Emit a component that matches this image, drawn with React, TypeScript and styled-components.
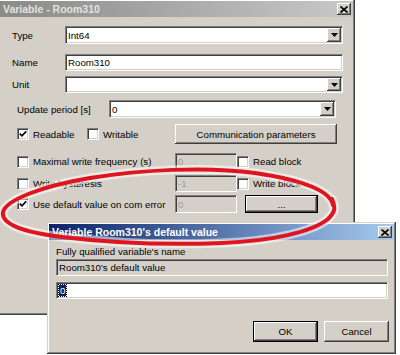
import React from "react";
import styled, { createGlobalStyle, css } from "styled-components";

const GlobalStyle = createGlobalStyle`
  html, body { margin: 0; padding: 0; background: #fff; }
  body { font-family: "Liberation Sans", Arial, sans-serif; font-size: 9.7px; color: #000; }
  * { box-sizing: border-box; }
`;

const raised = css`
  box-shadow: inset -1px -1px #404040, inset 1px 1px #fff, inset -2px -2px #808080, inset 2px 2px #d4d0c8;
`;

const Desktop = styled.div`
  position: relative;
  width: 400px;
  height: 355px;
  overflow: hidden;
  background: #fff;
`;

const Window = styled.div<{ $x: number; $y: number; $w: number; $h: number }>`
  position: absolute;
  left: ${(p) => p.$x}px;
  top: ${(p) => p.$y}px;
  width: ${(p) => p.$w}px;
  height: ${(p) => p.$h}px;
  background: #d4d0c8;
  padding: 2px;
  box-shadow: inset -1px -1px #404040, inset 1px 1px #d4d0c8, inset -2px -2px #808080, inset 2px 2px #fff;
  display: flex;
  flex-direction: column;
`;

const TitleBar = styled.div<{ $active?: boolean }>`
  height: 16px;
  flex: none;
  display: flex;
  align-items: center;
  justify-content: space-between;
  padding: 0 2px 0 3px;
  background: ${(p) =>
    p.$active
      ? "linear-gradient(to right, #0a246a, #a6caf0)"
      : "linear-gradient(to right, #8a8a8a, #c8c8c8)"};
  color: ${(p) => (p.$active ? "#fff" : "#e4e2dc")};
  font-weight: bold;
  font-size: 10.5px;
  white-space: nowrap;
`;

const CloseButton = styled.div`
  width: 14px;
  height: 12px;
  background: #d4d0c8;
  ${raised};
  display: flex;
  align-items: center;
  justify-content: center;
  svg { display: block; }
`;

const MainBody = styled.div`
  display: flex;
  flex-direction: column;
  padding: 0 10px 0 12px;
`;

const FieldRow = styled.div<{ $gap: number; $h: number; $indent?: number; $right?: number }>`
  display: flex;
  align-items: center;
  margin-top: ${(p) => p.$gap}px;
  height: ${(p) => p.$h}px;
  padding-left: ${(p) => p.$indent ?? 0}px;
  padding-right: ${(p) => p.$right ?? 0}px;
`;

const Label = styled.span<{ $w: number }>`
  width: ${(p) => p.$w}px;
  flex: none;
  white-space: nowrap;
`;

const Field = styled.div<{ $disabled?: boolean; $w?: number }>`
  ${(p) => (p.$w ? `width: ${p.$w}px; flex: none;` : "flex: 1;")}
  height: 100%;
  display: flex;
  align-items: center;
  padding-left: 2px;
  border: 1px solid;
  border-color: #808080 #fff #fff #808080;
  box-shadow: inset 1px 1px #404040, inset -1px -1px #d4d0c8;
  background: ${(p) => (p.$disabled ? "#d4d0c8" : "#fff")};
  color: ${(p) => (p.$disabled ? "#a09c94" : "#000")};
  white-space: nowrap;
`;

const FieldText = styled.span`
  flex: 1;
`;

const DropButton = styled.div`
  width: 14px;
  align-self: stretch;
  margin: 1px;
  background: #d4d0c8;
  ${raised};
  display: flex;
  align-items: center;
  justify-content: center;
  svg { display: block; }
`;

const LowerSection = styled.div`
  display: flex;
  flex-direction: column;
  padding: 0 6px 0 5px;
`;

const OptionRow = styled.div<{ $gap: number; $h: number }>`
  display: flex;
  align-items: center;
  margin-top: ${(p) => p.$gap}px;
  height: ${(p) => p.$h}px;
`;

const CheckItem = styled.label<{ $w?: number }>`
  display: flex;
  align-items: center;
  gap: 4px;
  ${(p) => (p.$w ? `width: ${p.$w}px; flex: none;` : "flex: 1;")}
  white-space: nowrap;
`;

const CheckBox = styled.span`
  width: 12px;
  height: 12px;
  flex: none;
  background: #fff;
  border: 1px solid;
  border-color: #808080 #fff #fff #808080;
  box-shadow: inset 1px 1px #404040, inset -1px -1px #d4d0c8;
  display: flex;
  align-items: center;
  justify-content: center;
  svg { display: block; }
`;

const Button = styled.div<{ $w: number; $default?: boolean; $ml?: number }>`
  width: ${(p) => p.$w}px;
  height: 100%;
  flex: none;
  margin-left: ${(p) => p.$ml ?? 0}px;
  background: #d4d0c8;
  display: flex;
  align-items: center;
  justify-content: center;
  white-space: nowrap;
  ${(p) =>
    p.$default
      ? css`
          border: 1px solid #000;
          box-shadow: inset -1px -1px #404040, inset 1px 1px #fff, inset -2px -2px #808080;
        `
      : raised};
`;

const DialogBody = styled.div`
  display: flex;
  flex-direction: column;
  padding: 0 6px 0 7px;
`;

const DialogLabel = styled.div`
  margin-top: 6px;
  height: 12px;
  line-height: 12px;
  white-space: nowrap;
`;

const DialogField = styled(Field)`
  flex: none;
  height: 17px;
  margin-top: ${(p: { $gap?: number }) => p.$gap ?? 0}px;
`;

const Selected = styled.span`
  background: #0a246a;
  color: #fff;
  padding: 0 1px;
  outline: 1px dotted #000;
`;

const ButtonRow = styled.div`
  display: flex;
  justify-content: flex-end;
  gap: 6px;
  margin-top: 22px;
  margin-right: -1px;
  height: 21px;
`;

const Annotation = styled.svg`
  position: absolute;
  left: 0;
  top: 0;
  pointer-events: none;
`;

const CloseGlyph = () => (
  <svg width="8" height="7" viewBox="0 0 8 7">
    <path d="M0.5 0.5 L7.5 6.5 M7.5 0.5 L0.5 6.5" stroke="#000" strokeWidth="1.6" />
  </svg>
);

const Arrow = () => (
  <svg width="7" height="4" viewBox="0 0 7 4">
    <path d="M0 0 H7 L3.5 4 Z" fill="#000" />
  </svg>
);

const Check = () => (
  <svg width="8" height="8" viewBox="0 0 8 8">
    <path d="M0.8 3.6 L3 5.8 L7.2 1.4" stroke="#000" strokeWidth="1.7" fill="none" />
  </svg>
);

const Combo = ({ value }: { value: string }) => (
  <Field>
    <FieldText>{value}</FieldText>
    <DropButton>
      <Arrow />
    </DropButton>
  </Field>
);

const Option = ({ label, checked, w }: { label: string; checked?: boolean; w?: number }) => (
  <CheckItem $w={w}>
    <CheckBox>{checked && <Check />}</CheckBox>
    <span>{label}</span>
  </CheckItem>
);

const ellipse =
  "M333 205 C330 190 302 180 255 173 C205 166 140 170 90 178 C42 186 6 200 3 212 C1 224 22 232 62 237 C112 243 172 245 222 243 C272 241 312 232 328 219 C335 212 336 208 332 199";

export default function App() {
  return (
    <>
      <GlobalStyle />
      <Desktop>
        <Window $x={-2} $y={-1} $w={357} $h={316}>
          <TitleBar>
            <span>Variable - Room310</span>
            <CloseButton>
              <CloseGlyph />
            </CloseButton>
          </TitleBar>
          <MainBody>
            <FieldRow $gap={9} $h={18}>
              <Label $w={53}>Type</Label>
              <Combo value="Int64" />
            </FieldRow>
            <FieldRow $gap={10} $h={17}>
              <Label $w={53}>Name</Label>
              <Field>
                <FieldText>Room310</FieldText>
              </Field>
            </FieldRow>
            <FieldRow $gap={5} $h={17}>
              <Label $w={53}>Unit</Label>
              <Combo value="" />
            </FieldRow>
            <FieldRow $gap={7} $h={18} $indent={5} $right={7}>
              <Label $w={92}>Update period [s]</Label>
              <Combo value="0" />
            </FieldRow>
            <LowerSection>
              <OptionRow $gap={6} $h={20}>
                <Option label="Readable" checked w={70} />
                <Option label="Writable" />
                <Button $w={162}>Communication parameters</Button>
              </OptionRow>
              <OptionRow $gap={9} $h={17}>
                <Option label="Maximal write frequency (s)" w={158} />
                <Field $disabled $w={62}>0</Field>
                <Option label="Read block" w={92} />
              </OptionRow>
              <OptionRow $gap={5} $h={17}>
                <Option label="Write hysteresis" w={158} />
                <Field $disabled $w={62}>-1</Field>
                <Option label="Write block" w={92} />
              </OptionRow>
              <OptionRow $gap={3} $h={18}>
                <Option label="Use default value on com error" checked w={158} />
                <Field $disabled $w={62}>0</Field>
                <Button $w={73} $ml={8} $default>...</Button>
              </OptionRow>
            </LowerSection>
          </MainBody>
        </Window>

        <Window $x={47} $y={222} $w={349} $h={132}>
          <TitleBar $active>
            <span>Variable Room310's default value</span>
            <CloseButton>
              <CloseGlyph />
            </CloseButton>
          </TitleBar>
          <DialogBody>
            <DialogLabel>Fully qualified variable's name</DialogLabel>
            <DialogField $disabled $gap={1} style={{ color: "#000" }}>
              Room310's default value
            </DialogField>
            <DialogField $gap={6}>
              <Selected>0</Selected>
            </DialogField>
            <ButtonRow>
              <Button $w={65} $default>OK</Button>
              <Button $w={65}>Cancel</Button>
            </ButtonRow>
          </DialogBody>
        </Window>

        <Annotation width="400" height="355" viewBox="0 0 400 355">
          <path d={ellipse} stroke="#fff" strokeOpacity="0.55" strokeWidth="9" fill="none" strokeLinecap="round" />
          <path d={ellipse} stroke="#e0141e" strokeWidth="4" fill="none" strokeLinecap="round" />
        </Annotation>
      </Desktop>
    </>
  );
}
